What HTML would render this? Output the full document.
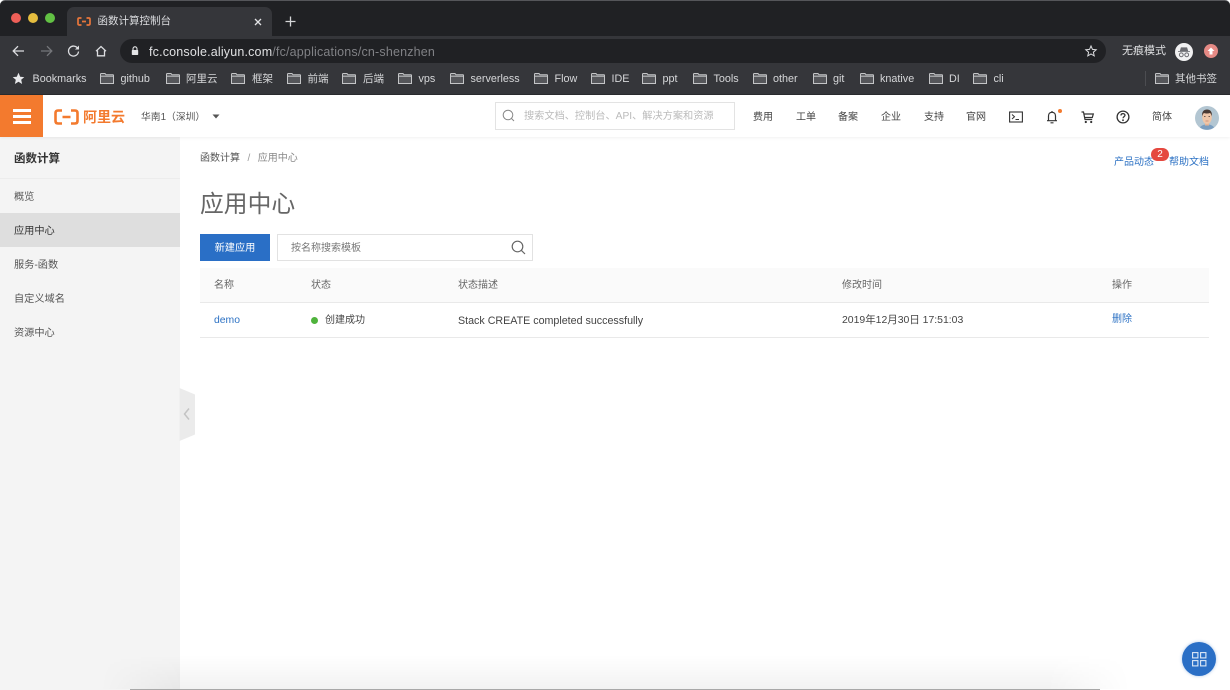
<!DOCTYPE html>
<html lang="zh">
<head>
<meta charset="utf-8">
<title>函数计算控制台</title>
<style>
html,body{margin:0;padding:0;width:1230px;height:690px;overflow:hidden;background:#fff}
body{position:relative;font-family:"Liberation Sans","Noto Sans CJK SC",sans-serif;font-size:10px;color:#333}
.a{position:absolute;white-space:nowrap}
svg{position:absolute;display:block;overflow:visible}
.bm{position:absolute;top:71.500px;height:14px;line-height:14px;color:#d6d7d9;font-size:10.800px;white-space:nowrap}
.f{position:absolute;top:73px;width:14px;height:11px}
.nav{position:absolute;top:110.500px;line-height:14px;font-size:10px;color:#444;white-space:nowrap;z-index:4}
.side{position:absolute;left:14px;line-height:14px;font-size:10.200px;color:#555;white-space:nowrap}
.th{position:absolute;top:279px;line-height:14px;font-size:10px;color:#666;white-space:nowrap}
.td{position:absolute;top:314px;line-height:14px;font-size:10px;color:#444;white-space:nowrap}
</style>
</head>
<body>
<!-- browser chrome -->
<div class="a" style="left:0;top:0;width:1230px;height:36px;background:#202124;border-top:1px solid #55565a;box-sizing:border-box;border-radius:5px 5px 0 0"></div>
<div class="a" style="left:0;top:36px;width:1230px;height:27px;background:#35363a"></div>
<div class="a" style="left:0;top:63px;width:1230px;height:32px;background:#35363a;border-bottom:1px solid #2a2b2e;box-sizing:border-box"></div>
<div class="a" style="left:11px;top:13px;width:10px;height:10px;border-radius:50%;background:#ee5f58"></div>
<div class="a" style="left:28px;top:13px;width:10px;height:10px;border-radius:50%;background:#e5bd3f"></div>
<div class="a" style="left:45px;top:13px;width:10px;height:10px;border-radius:50%;background:#62c144"></div>
<div class="a" style="left:67px;top:7px;width:205px;height:29px;background:#35363a;border-radius:7px 7px 0 0"></div>
<svg style="left:77px;top:17px" width="14" height="9" viewBox="0 0 14 9"><path d="M4.500 1H2.200C1.400 1 1 1.500 1 2.200V6.800C1 7.500 1.400 8 2.200 8H4.500M9.500 1H11.800C12.600 1 13 1.500 13 2.200V6.800C13 7.500 12.600 8 11.800 8H9.500M5 4.500H9" fill="none" stroke="#e8763a" stroke-width="1.700"/></svg>
<div class="a" style="left:97.500px;top:14px;line-height:15px;font-size:10.500px;color:#dcdde0">函数计算控制台</div>
<svg style="left:254px;top:18px" width="8" height="8" viewBox="0 0 8 8"><path d="M1 1L7 7M7 1L1 7" stroke="#e2e3e5" stroke-width="1.300"/></svg>
<svg style="left:285px;top:16px" width="11" height="11" viewBox="0 0 11 11"><path d="M5.500 0.500V10.500M0.500 5.500H10.500" stroke="#d5d6d8" stroke-width="1.300"/></svg>

<svg style="left:12px;top:45px" width="13" height="12" viewBox="0 0 13 12"><path d="M12 6H1.500M6 1.200L1.200 6L6 10.800" fill="none" stroke="#dcdde0" stroke-width="1.300"/></svg>
<svg style="left:40px;top:45px" width="13" height="12" viewBox="0 0 13 12"><path d="M1 6H11.500M7 1.200L11.800 6L7 10.800" fill="none" stroke="#75767a" stroke-width="1.300"/></svg>
<svg style="left:67px;top:45px" width="13" height="12" viewBox="0 0 13 12"><path d="M10.800 3.500A5 5 0 1 0 11.500 6.500" fill="none" stroke="#dcdde0" stroke-width="1.300"/><path d="M12 0.500V4.500H8Z" fill="#dcdde0"/></svg>
<svg style="left:95px;top:45px" width="12" height="12" viewBox="0 0 12 12"><path d="M1 6.200L6 1.500L11 6.200M2.500 5.500V10.800H9.500V5.500" fill="none" stroke="#dcdde0" stroke-width="1.300"/></svg>
<div class="a" style="left:120px;top:39px;width:986px;height:24px;background:#202124;border-radius:12px"></div>
<svg style="left:131px;top:46px" width="8" height="10" viewBox="0 0 8 10"><path d="M2 4V2.800A2 2 0 0 1 6 2.800V4" fill="none" stroke="#e4e5e7" stroke-width="1.100"/><rect x="0.800" y="4" width="6.400" height="5" rx="0.700" fill="#e4e5e7"/></svg>
<div class="a" style="left:149px;top:43.500px;line-height:16px;font-size:12.500px;color:#e0e1e3;letter-spacing:.18px">fc.console.aliyun.com<span style="color:#808185">/fc/applications/cn-shenzhen</span></div>
<svg style="left:1085px;top:45px" width="12" height="12" viewBox="0 0 12 12"><path d="M6 1L7.500 4.400L11.200 4.800L8.400 7.200L9.200 10.900L6 9L2.800 10.900L3.600 7.200L0.800 4.800L4.500 4.400Z" fill="none" stroke="#dcdde0" stroke-width="1"/></svg>
<div class="a" style="left:1122px;top:44px;line-height:15px;font-size:11px;color:#e0e1e3">无痕模式</div>
<div class="a" style="left:1175px;top:43px;width:18px;height:18px;border-radius:50%;background:#f1f1f2"></div>
<svg style="left:1177px;top:47px" width="14" height="11" viewBox="0 0 14 11"><path d="M1 4.500H13M3.200 4.200L4.200 0.800H9.800L10.800 4.200" fill="#6a6b70" stroke="#6a6b70" stroke-width=".800"/><circle cx="4.300" cy="7.800" r="1.900" fill="none" stroke="#6a6b70"/><circle cx="9.700" cy="7.800" r="1.900" fill="none" stroke="#6a6b70"/></svg>
<div class="a" style="left:1204px;top:44px;width:14px;height:14px;border-radius:50%;background:#e58a85"></div>
<svg style="left:1207px;top:47px" width="8" height="8" viewBox="0 0 8 8"><path d="M4 0.500L7.500 4H5.500V7.500H2.500V4H0.500Z" fill="#fff"/></svg>

<svg style="left:12px;top:72px" width="13" height="13" viewBox="0 0 13 13"><path d="M6.500 0.800L8.200 4.700L12.300 5.100L9.200 7.800L10.100 12L6.500 9.800L2.900 12L3.800 7.800L0.700 5.100L4.800 4.700Z" fill="#e8e9eb"/></svg>
<div class="bm" style="left:32.500px">Bookmarks</div>
<svg width="0" height="0" style="left:0;top:0"><defs><g id="fd"><path d="M0.500 10.500V1.200C0.500 0.800 0.800 0.500 1.200 0.500H5L6 1.800H13C13.300 1.800 13.500 2 13.500 2.300V10.500Z" fill="#55565a" stroke="#c4c5c7" stroke-width="1"/><path d="M0.500 3.200H13.500" stroke="#c4c5c7" stroke-width="1"/></g></defs></svg>
<svg class="f" style="left:100px" viewBox="0 0 14 11"><use href="#fd"/></svg><div class="bm" style="left:120.500px">github</div>
<svg class="f" style="left:166px" viewBox="0 0 14 11"><use href="#fd"/></svg><div class="bm" style="left:186px;font-size:10.500px">阿里云</div>
<svg class="f" style="left:231px" viewBox="0 0 14 11"><use href="#fd"/></svg><div class="bm" style="left:252px;font-size:10.500px">框架</div>
<svg class="f" style="left:287px" viewBox="0 0 14 11"><use href="#fd"/></svg><div class="bm" style="left:307.500px;font-size:10.500px">前端</div>
<svg class="f" style="left:342px" viewBox="0 0 14 11"><use href="#fd"/></svg><div class="bm" style="left:363px;font-size:10.500px">后端</div>
<svg class="f" style="left:398px" viewBox="0 0 14 11"><use href="#fd"/></svg><div class="bm" style="left:418.500px">vps</div>
<svg class="f" style="left:450px" viewBox="0 0 14 11"><use href="#fd"/></svg><div class="bm" style="left:470.500px">serverless</div>
<svg class="f" style="left:534px" viewBox="0 0 14 11"><use href="#fd"/></svg><div class="bm" style="left:554.500px">Flow</div>
<svg class="f" style="left:591px" viewBox="0 0 14 11"><use href="#fd"/></svg><div class="bm" style="left:611.500px">IDE</div>
<svg class="f" style="left:642px" viewBox="0 0 14 11"><use href="#fd"/></svg><div class="bm" style="left:662.500px">ppt</div>
<svg class="f" style="left:692.500px" viewBox="0 0 14 11"><use href="#fd"/></svg><div class="bm" style="left:713.500px">Tools</div>
<svg class="f" style="left:752.500px" viewBox="0 0 14 11"><use href="#fd"/></svg><div class="bm" style="left:773px">other</div>
<svg class="f" style="left:812.500px" viewBox="0 0 14 11"><use href="#fd"/></svg><div class="bm" style="left:833px">git</div>
<svg class="f" style="left:859.500px" viewBox="0 0 14 11"><use href="#fd"/></svg><div class="bm" style="left:880px">knative</div>
<svg class="f" style="left:928.500px" viewBox="0 0 14 11"><use href="#fd"/></svg><div class="bm" style="left:949px">DI</div>
<svg class="f" style="left:973px" viewBox="0 0 14 11"><use href="#fd"/></svg><div class="bm" style="left:993.500px">cli</div>
<div class="a" style="left:1145px;top:71px;width:1px;height:15px;background:#4c4d51"></div>
<svg class="f" style="left:1155px" viewBox="0 0 14 11"><use href="#fd"/></svg><div class="bm" style="left:1175px;font-size:10.500px">其他书签</div>

<!-- console top bar -->
<div class="a" style="left:0;top:95px;width:1230px;height:42px;background:#fff;box-shadow:0 1px 3px rgba(0,0,0,.06);z-index:3"></div>
<div class="a" style="left:0;top:95px;width:43px;height:42px;background:#f37a2e;z-index:4"></div>
<div class="a" style="left:13px;top:109px;width:18px;height:3px;background:#fff;z-index:4"></div>
<div class="a" style="left:13px;top:115px;width:18px;height:3px;background:#fff;z-index:4"></div>
<div class="a" style="left:13px;top:121px;width:18px;height:3px;background:#fff;z-index:4"></div>
<svg style="left:54px;top:109px;z-index:4" width="25" height="16" viewBox="0 0 25 16"><path d="M8 1.500H4C2.300 1.500 1.500 2.500 1.500 4V12C1.500 13.500 2.300 14.500 4 14.500H8M17 1.500H21C22.700 1.500 23.500 2.500 23.500 4V12C23.500 13.500 22.700 14.500 21 14.500H17M8.500 8H16.500" fill="none" stroke="#f37a2e" stroke-width="2.600"/></svg>
<div class="a" style="left:83px;top:108px;line-height:18px;font-size:14px;font-weight:700;color:#f37a2e;z-index:4">阿里云</div>
<div class="a" style="left:141px;top:110px;line-height:15px;font-size:9.800px;color:#555;z-index:4">华南1（深圳）</div>
<svg style="left:212px;top:114px;z-index:4" width="8" height="5" viewBox="0 0 8 5"><path d="M0.500 0.500H7.500L4 4.500Z" fill="#555"/></svg>
<div class="a" style="left:495px;top:102px;width:240px;height:28px;border:1px solid #e3e3e3;box-sizing:border-box;z-index:4"></div>
<svg style="left:502px;top:109px;z-index:4" width="13" height="13" viewBox="0 0 13 13"><circle cx="6" cy="6" r="4.800" fill="none" stroke="#888" stroke-width="1"/><path d="M9.500 9.500L12 12" stroke="#888" stroke-width="1"/></svg>
<div class="a" style="left:524px;top:109px;line-height:15px;font-size:10.200px;color:#bbb;z-index:4">搜索文档、控制台、API、解决方案和资源</div>
<div class="nav" style="left:753px">费用</div>
<div class="nav" style="left:796px">工单</div>
<div class="nav" style="left:838px">备案</div>
<div class="nav" style="left:881px">企业</div>
<div class="nav" style="left:924px">支持</div>
<div class="nav" style="left:966px">官网</div>
<svg style="left:1009px;top:111px;z-index:4" width="14" height="12" viewBox="0 0 14 12"><rect x="0.600" y="1" width="12.800" height="10" fill="none" stroke="#333" stroke-width="1.100"/><path d="M3 3.500L5.500 5.800L3 8M6.500 8.500H10" fill="none" stroke="#333" stroke-width="1"/></svg>
<svg style="left:1046px;top:110px;z-index:4" width="12" height="14" viewBox="0 0 12 14"><path d="M2.500 10.500V6C2.500 3.800 3.800 2.300 6 2.300C8.200 2.300 9.500 3.800 9.500 6V10.500M1 10.700H11M4.500 12.800H7.500M6 1V2.300" fill="none" stroke="#333" stroke-width="1.200"/></svg>
<div class="a" style="left:1058px;top:109px;width:4px;height:4px;border-radius:50%;background:#f37a2e;z-index:4"></div>
<svg style="left:1081px;top:111px;z-index:4" width="13" height="13" viewBox="0 0 13 13"><path d="M0.500 1H2.500L4 8.500H11.200M3 3H12.300L11.300 6.500H3.800" fill="none" stroke="#333" stroke-width="1.200"/><circle cx="4.800" cy="11" r="1.100" fill="#333"/><circle cx="10.200" cy="11" r="1.100" fill="#333"/></svg>
<svg style="left:1116px;top:110px;z-index:4" width="14" height="14" viewBox="0 0 14 14"><circle cx="7" cy="7" r="5.900" fill="none" stroke="#333" stroke-width="1.300"/><path d="M5 5.500C5 4.200 5.900 3.600 7 3.600C8.100 3.600 9 4.300 9 5.300C9 6.600 7 6.700 7 8.300" fill="none" stroke="#333" stroke-width="1.300"/><circle cx="7" cy="10.200" r=".900" fill="#333"/></svg>
<div class="nav" style="left:1152px">简体</div>
<svg style="left:1195px;top:106px;z-index:4" width="24" height="24" viewBox="0 0 24 24"><circle cx="12" cy="12" r="12" fill="#b3c6d2"/><path d="M5 21.500C6.500 19 9 18.500 12 18.500C15 18.500 17.500 19 19 21.500A12 12 0 0 1 5 21.500Z" fill="#7b9ec0"/><rect x="10" y="15" width="4" height="4.500" fill="#e6b495"/><ellipse cx="12" cy="11.500" rx="4.800" ry="6.500" fill="#f0c6a8"/><path d="M7.200 10.500C6.500 5.500 9 3.500 12 3.500C15 3.500 17.500 5.500 16.800 10.500C16.400 8.500 15.800 7.500 15 7C13 7.800 10.500 7.500 9 7C8 7.800 7.500 8.800 7.200 10.500Z" fill="#4a3a33"/><path d="M9 10.500H10.500M13.500 10.500H15" stroke="#4a3a33" stroke-width=".800"/><path d="M10.500 15H13.500" stroke="#c0806a" stroke-width=".700"/></svg>

<!-- sidebar -->
<div class="a" style="left:0;top:137px;width:179.500px;height:553px;background:#f4f4f4"></div>
<div class="a" style="left:0;top:178px;width:179.500px;height:1px;background:#ececec"></div>
<div class="a" style="left:14px;top:150.500px;line-height:16px;font-size:11.500px;font-weight:700;color:#333">函数计算</div>
<div class="side" style="top:190.500px">概览</div>
<div class="a" style="left:0;top:213px;width:179.500px;height:34px;background:#dedede"></div>
<div class="side" style="top:224.500px;color:#333">应用中心</div>
<div class="side" style="top:258.500px">服务-函数</div>
<div class="side" style="top:292.500px">自定义域名</div>
<div class="side" style="top:326.500px">资源中心</div>
<svg style="left:179px;top:388px" width="16" height="53" viewBox="0 0 16 53"><path d="M0.500 0L16 6.500V46.500L0.500 53Z" fill="#ebebeb"/><path d="M10 20.500L5.500 26L10 31.500" fill="none" stroke="#c4c4c4" stroke-width="1.500"/></svg>

<!-- main content -->
<div class="a" style="left:200px;top:152px;line-height:14px;font-size:10px;color:#555">函数计算<span style="color:#999;margin:0 7.500px">/</span><span style="color:#888">应用中心</span></div>
<div class="a" style="left:1114px;top:156px;line-height:14px;font-size:10px;color:#2d72c4">产品动态</div>
<div class="a" style="left:1169px;top:156px;line-height:14px;font-size:10px;color:#2d72c4">帮助文档</div>
<div class="a" style="left:1151px;top:148px;width:18px;height:13px;border-radius:7px;background:#e5483f;color:#fff;font-size:10px;line-height:13px;text-align:center">2</div>
<div class="a" style="left:200px;top:189.500px;line-height:30px;font-size:23.800px;color:#666">应用中心</div>
<div class="a" style="left:200px;top:234px;width:70px;height:27px;background:#2a6fc6;color:#fff;font-size:10.200px;line-height:29px;text-align:center">新建应用</div>
<div class="a" style="left:277px;top:234px;width:256px;height:27px;border:1px solid #e2e2e2;box-sizing:border-box"></div>
<div class="a" style="left:291px;top:242px;line-height:14px;font-size:10px;color:#777">按名称搜索模板</div>
<svg style="left:511px;top:240px" width="15" height="15" viewBox="0 0 15 15"><circle cx="6.500" cy="6.500" r="5.300" fill="none" stroke="#666" stroke-width="1.200"/><path d="M10.300 10.300L14 14" stroke="#666" stroke-width="1.200"/></svg>

<div class="a" style="left:200px;top:268px;width:1009px;height:35px;background:#fafafa;border-bottom:1px solid #e9e9e9;box-sizing:border-box"></div>
<div class="th" style="left:214px">名称</div>
<div class="th" style="left:311px">状态</div>
<div class="th" style="left:458px">状态描述</div>
<div class="th" style="left:842px">修改时间</div>
<div class="th" style="left:1112px">操作</div>
<div class="td" style="left:214px;color:#2d72c4;font-size:10.400px">demo</div>
<div class="a" style="left:311px;top:316.500px;width:7px;height:7px;border-radius:50%;background:#4fb33c"></div>
<div class="td" style="left:325px">创建成功</div>
<div class="td" style="left:458px;top:313.500px;font-size:10.700px">Stack CREATE completed successfully</div>
<div class="td" style="left:842px;font-size:10.450px">2019年12月30日 17:51:03</div>
<div class="td" style="left:1112px;top:313px;color:#2d72c4">删除</div>
<div class="a" style="left:200px;top:337px;width:1009px;height:1px;background:#e9e9e9"></div>

<!-- floating button -->
<div class="a" style="left:1182px;top:642px;width:34px;height:34px;border-radius:50%;background:#2a6fc6;box-shadow:0 0 3px rgba(42,111,198,.4)"></div>
<svg style="left:1192px;top:652px" width="15" height="15" viewBox="0 0 15 15"><g fill="none" stroke="#dce8f6" stroke-width="1.100"><rect x="0.600" y="0.600" width="5.300" height="5.300"/><rect x="8.600" y="0.600" width="5.300" height="5.300"/><rect x="0.600" y="8.600" width="5.300" height="5.300"/><rect x="8.600" y="8.600" width="5.300" height="5.300"/></g></svg>

<!-- window bottom shadow -->
<div class="a" style="left:100px;top:655px;width:1030px;height:34px;background:linear-gradient(to bottom,rgba(0,0,0,0),rgba(0,0,0,.05));-webkit-mask-image:linear-gradient(to right,transparent,#000 8%,#000 92%,transparent)"></div>
<div class="a" style="left:130px;top:689px;width:970px;height:1px;background:#a8a8a8"></div>
</body>
</html>
